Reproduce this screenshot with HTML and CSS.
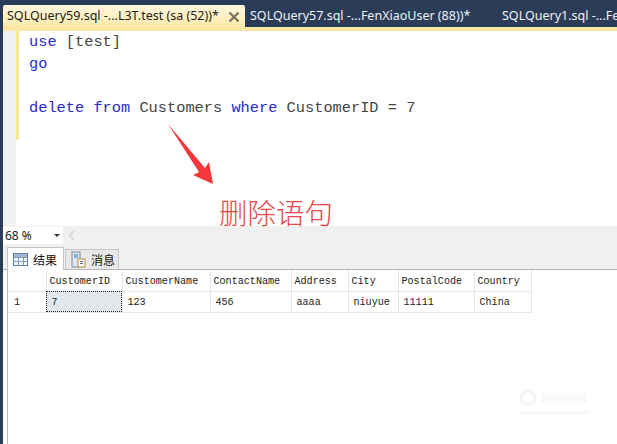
FILE: index.html
```html
<!DOCTYPE html>
<html lang="zh">
<head>
<meta charset="utf-8">
<title>SQLQuery59.sql</title>
<link rel="stylesheet" href="styles.css">
</head>
<body>
<div class="app">
  <div class="tabs">
    <div class="tab active"><span>SQLQuery59.sql -...L3T.test (sa (52))*</span>
      <svg class="close" width="12" height="12" viewBox="0 0 12 12"><path d="M1.500 1.500l9 9M10.500 1.500l-9 9" stroke="#77705c" stroke-width="2.200" fill="none"/></svg>
    </div>
    <div class="tab second">SQLQuery57.sql -...FenXiaoUser (88))*</div>
    <div class="tab third">SQLQuery1.sql -...Fe</div>
  </div>
  <div class="accent"></div>
  <div class="pane">
    <div class="editor">
      <div class="gutter"></div>
      <div class="change"></div>
      <pre class="code"><span class="kw">use</span> [test]
<span class="kw">go</span>

<span class="kw">delete</span> <span class="kw">from</span> Customers <span class="kw">where</span> CustomerID = 7</pre>
      <svg class="arrow" width="60" height="70" viewBox="0 0 60 70"><path d="M0 0 L37 44 L41 38 L45 60 L25 51 L31 48 Z" fill="#f5363a"/></svg>
      <div class="note">删除语句</div>
    </div>
    <div class="statusbar">
      <div class="zoom"><span>68 %</span><span class="caret"></span></div>
      <svg class="chev" width="7" height="11" viewBox="0 0 7 11"><path d="M6 1L1.500 5.500 6 10" stroke="#d4d4d4" stroke-width="1.600" fill="none"/></svg>
    </div>
    <div class="rtabs">
      <div class="rtab on">
        <svg width="15" height="13" viewBox="0 0 15 13"><rect x=".5" y=".5" width="14" height="12" fill="#f4f7fb" stroke="#5c7fa8"/><path d="M.5 4.500h14M.5 8.500h14M5.500 .5v12M10.500 .5v12" stroke="#7f9cc0" fill="none"/><rect x="1" y="1" width="13" height="3" fill="#9db6d3"/></svg>
        <span>结果</span>
      </div>
      <div class="rtab">
        <svg width="15" height="17" viewBox="0 0 15 17"><rect x="1" y="1" width="8" height="15" fill="#dfe6ee" stroke="#7c8a9c"/><rect x="3" y="3" width="4" height="4" fill="#7fb0dd"/><rect x="7" y="8" width="7" height="8" fill="#fff" stroke="#c08a3a"/><path d="M9 10.500h3M9 12.500h3" stroke="#5d7391"/></svg>
        <span>消息</span>
      </div>
    </div>
    <div class="results">
      <div class="gridwrap">
        <table class="grid">
          <colgroup>
            <col class="c0"><col class="c1"><col class="c2"><col class="c3"><col class="c4"><col class="c5"><col class="c6"><col class="c7">
          </colgroup>
          <thead>
            <tr><th></th><th>CustomerID</th><th>CustomerName</th><th>ContactName</th><th>Address</th><th>City</th><th>PostalCode</th><th>Country</th></tr>
          </thead>
          <tbody>
            <tr><td class="num">1</td><td class="sel">7</td><td>123</td><td>456</td><td>aaaa</td><td>niuyue</td><td>11111</td><td>China</td></tr>
          </tbody>
        </table>
      </div>
      <svg class="mark" width="76" height="30" viewBox="0 0 76 30"><circle cx="11" cy="11" r="7" fill="none" stroke="#f6f6f6" stroke-width="3"/><path d="M24 6h46v10H24zM2 24h70v4H2z" fill="#f9f9f9"/></svg>
    </div>
  </div>
</div>
</body>
</html>
```
FILE: styles.css
```css
* { box-sizing: border-box; }
html, body { margin: 0; padding: 0; }
body { width: 617px; height: 444px; overflow: hidden; background: #fff; font-family: "Liberation Sans", sans-serif; }
.app { width: 617px; height: 444px; display: flex; flex-direction: column; background: #2b3c59; overflow: hidden; }
.tabs { height: 27px; padding: 5px 0 0 3px; display: flex; flex: none; }
.tab { font-family: "Noto Sans", sans-serif; font-size: 12.500px; line-height: 22px; color: #eef2f7; white-space: nowrap; flex: none; }
.tab.active { width: 242px; padding-left: 4px; display: flex; justify-content: space-between; align-items: center; background: linear-gradient(#fff8e0, #fde9a8); color: #1d1d1d; border-radius: 2px 2px 0 0; }
.close { margin-right: 5px; margin-top: 1px; }
.second { width: 252px; padding-left: 5px; }
.third { padding-left: 5px; }
.accent { height: 4px; margin-left: 3px; background: #fbe6a4; flex: none; }
.pane { flex: 1; margin-left: 3px; background: #fff; display: flex; flex-direction: column; min-height: 0; }
.editor { height: 195px; display: flex; position: relative; flex: none; background: #fff; }
.gutter { width: 13px; background: #eef0f2; }
.change { width: 3px; height: 109px; background: #f7e98e; }
.code { margin: 0; padding: 0 0 0 10px; font-family: "Liberation Mono", monospace; font-size: 15.330px; line-height: 22px; color: #444; }
.kw { color: #2a2acb; }
.arrow { position: absolute; left: 165px; top: 93px; }
.note { position: absolute; left: 216px; top: 163px; font-family: "Noto Sans CJK SC", sans-serif; font-size: 28.500px; font-weight: 300; line-height: 36px; color: #e8474c; }
.statusbar { height: 19px; background: #f0f0f0; display: flex; align-items: center; flex: none; }
.zoom { width: 60px; height: 17px; background: #fff; display: flex; align-items: center; justify-content: space-between; padding: 0 3px 0 2px; font-family: "Noto Sans", sans-serif; font-size: 12px; color: #222; }
.caret { width: 0; height: 0; border: 3px solid transparent; border-top-color: #333; border-bottom: 0; }
.chev { margin-left: 5px; }
.rtabs { height: 25px; background: #f0f0f0; display: flex; align-items: flex-end; padding-left: 4px; gap: 1px; flex: none; border-bottom: 1px solid #b5b5b5; }
.rtab { height: 20px; display: flex; align-items: center; gap: 5px; padding: 0 3px 0 5px; font-family: "Noto Sans CJK SC", sans-serif; font-size: 12px; color: #111; background: #e8e8e8; border: 1px solid #c6c6c6; border-bottom: 0; white-space: nowrap; }
.rtab.on { height: 23px; width: 57px; background: #fff; margin-bottom: -1px; position: relative; }
.results { flex: 1; background: #fff; padding-left: 4px; position: relative; }
.gridwrap { height: 100%; border-left: 1px solid #b5b5b5; }
.grid { border-collapse: collapse; table-layout: fixed; width: 523px; font-family: "Liberation Mono", monospace; font-size: 10.100px; color: #222; }
.grid th, .grid td { border: 1px solid #e6e6e6; font-weight: normal; text-align: left; padding: 2px 3px 0; white-space: nowrap; overflow: hidden; }
.grid th { height: 21px; border-top: 0; border-left: 0; }
.grid td { height: 21px; padding-left: 5px; }
.grid td.num { padding-left: 6px; border-left: 0; }
.grid .sel { background: #e3e8ec; outline: 1px dotted #222; outline-offset: -1px; }
.c0 { width: 38px; } .c1 { width: 76px; } .c2 { width: 88px; } .c3 { width: 81px; } .c4 { width: 57px; } .c5 { width: 50px; } .c6 { width: 76px; } .c7 { width: 57px; }
.mark { position: absolute; left: 514px; top: 117px; }
```
